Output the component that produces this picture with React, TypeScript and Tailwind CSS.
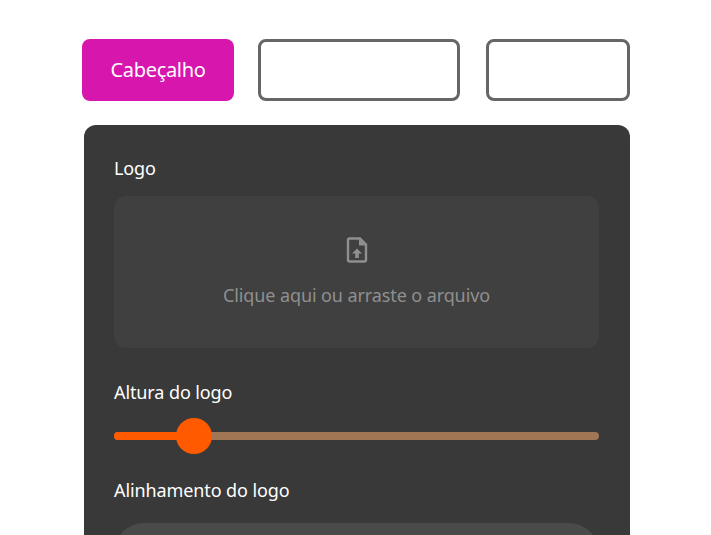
export default function App() {
  return (
    <div className="h-[535px] w-[711px] overflow-hidden bg-white font-['Noto_Sans',sans-serif]">
      <div className="flex items-start pl-[82px] pt-[39px]">
        <button className="flex h-[62px] w-[152px] items-center justify-center rounded-lg bg-[#d716ae] text-[20px] tracking-[-0.3px] text-white">
          Cabeçalho
        </button>
        <div className="ml-[24px] h-[62px] w-[202px] rounded-lg border-[3px] border-[#666666]" />
        <div className="ml-[26px] h-[62px] w-[144px] rounded-lg border-[3px] border-[#666666]" />
      </div>
      <div className="ml-[84px] mt-[24px] h-[500px] w-[545.5px] rounded-t-xl bg-[#393939] px-[30px] pt-[31px] text-[18px] tracking-[-0.1px] text-white">
        <div className="h-[25px] leading-[25px]">Logo</div>
        <div className="mt-[15px] flex h-[152px] w-[485px] flex-col items-center rounded-xl bg-[#404040] pt-[39px] text-[#8f8f8f]">
          <svg width="24" height="30" viewBox="0 0 24 30" fill="none" className="translate-x-[1px]">
            <path d="M3.500 3.500h10.500l6 6v15.500a1.500 1.500 0 0 1-1.500 1.500H3.500A1.500 1.500 0 0 1 2 25V5a1.500 1.500 0 0 1 1.500-1.500z" stroke="#8f8f8f" strokeWidth="2.400" />
            <path d="M13 3.500v7h7z" fill="#8f8f8f" />
            <path d="M11 13.500l-5 5h3.200v4.500h3.600v-4.500h3.200z" fill="#8f8f8f" />
          </svg>
          <div className="mt-[18px] leading-[25px]">Clique aqui ou arraste o arquivo</div>
        </div>
        <div className="mt-[32px] h-[25px] leading-[25px]">Altura do logo</div>
        <div className="relative mt-[27px] flex h-[8px] w-[485px] overflow-visible rounded-full bg-[#a17654]">
          <div className="h-full w-[80px] rounded-l-full bg-[#ff5a00]" />
          <div className="absolute left-[62px] top-[-14px] size-[36px] rounded-full bg-[#ff5a00]" />
        </div>
        <div className="mt-[38px] h-[25px] leading-[25px]">Alinhamento do logo</div>
        <div className="mt-[20px] h-[60px] w-[485px] rounded-[30px] bg-[#4a4a4a]" />
      </div>
    </div>
  );
}
